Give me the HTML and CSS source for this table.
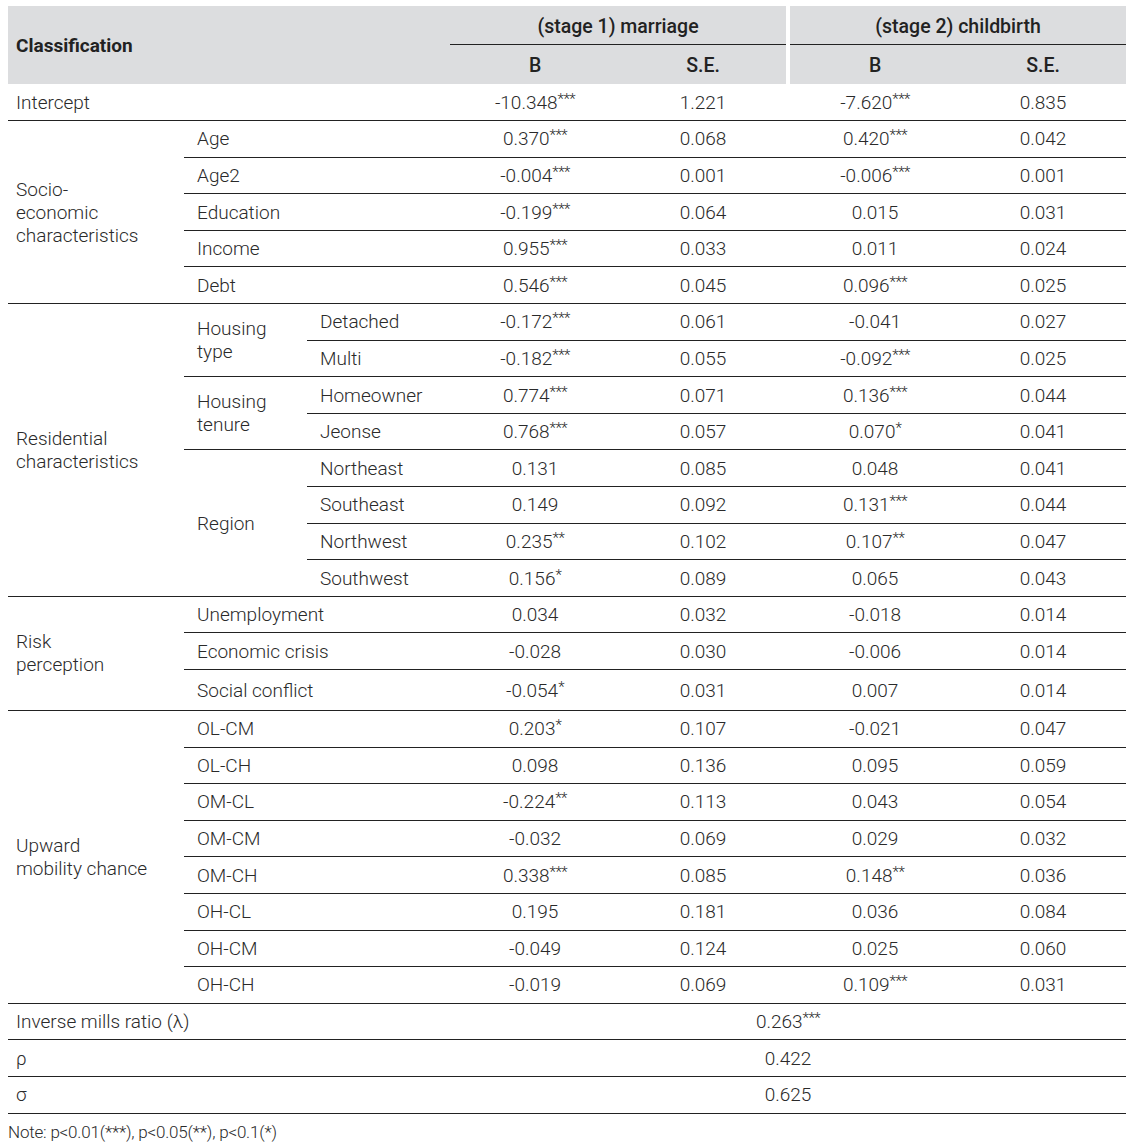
FILE: index.html
```html
<!DOCTYPE html>
<html lang="en">
<head>
<meta charset="utf-8">
<title>Heckman selection model results</title>
<link rel="stylesheet" href="styles.css">
</head>
<body>
<table class="results">
  <colgroup>
    <col class="c-cat"><col class="c-sub"><col class="c-item">
    <col class="c-b"><col class="c-se"><col class="c-gap"><col class="c-b"><col class="c-se2">
  </colgroup>
  <thead>
    <tr class="h1">
      <th class="cls" colspan="3" rowspan="2">Classification</th>
      <th class="stage" colspan="2">(stage 1) marriage</th>
      <th class="gap" rowspan="2"></th>
      <th class="stage" colspan="2">(stage 2) childbirth</th>
    </tr>
    <tr class="h2">
      <th class="sub">B</th><th class="sub">S.E.</th>
      <th class="sub">B</th><th class="sub">S.E.</th>
    </tr>
  </thead>
  <tbody>
    <tr><td class="lab" colspan="3">Intercept</td><td class="n">-10.348<sup>***</sup></td><td class="n">1.221</td><td class="g"></td><td class="n">-7.620<sup>***</sup></td><td class="n">0.835</td></tr>

    <tr><td class="lab" rowspan="5">Socio-<br>economic<br>characteristics</td><td class="lab2" colspan="2">Age</td><td class="n">0.370<sup>***</sup></td><td class="n">0.068</td><td class="g"></td><td class="n">0.420<sup>***</sup></td><td class="n">0.042</td></tr>
    <tr><td class="lab2" colspan="2">Age2</td><td class="n">-0.004<sup>***</sup></td><td class="n">0.001</td><td class="g"></td><td class="n">-0.006<sup>***</sup></td><td class="n">0.001</td></tr>
    <tr><td class="lab2" colspan="2">Education</td><td class="n">-0.199<sup>***</sup></td><td class="n">0.064</td><td class="g"></td><td class="n">0.015</td><td class="n">0.031</td></tr>
    <tr><td class="lab2" colspan="2">Income</td><td class="n">0.955<sup>***</sup></td><td class="n">0.033</td><td class="g"></td><td class="n">0.011</td><td class="n">0.024</td></tr>
    <tr><td class="lab2" colspan="2">Debt</td><td class="n">0.546<sup>***</sup></td><td class="n">0.045</td><td class="g"></td><td class="n">0.096<sup>***</sup></td><td class="n">0.025</td></tr>

    <tr><td class="lab" rowspan="8">Residential<br>characteristics</td><td class="lab2" rowspan="2">Housing<br>type</td><td class="lab2">Detached</td><td class="n">-0.172<sup>***</sup></td><td class="n">0.061</td><td class="g"></td><td class="n">-0.041</td><td class="n">0.027</td></tr>
    <tr><td class="lab2">Multi</td><td class="n">-0.182<sup>***</sup></td><td class="n">0.055</td><td class="g"></td><td class="n">-0.092<sup>***</sup></td><td class="n">0.025</td></tr>
    <tr><td class="lab2" rowspan="2">Housing<br>tenure</td><td class="lab2">Homeowner</td><td class="n">0.774<sup>***</sup></td><td class="n">0.071</td><td class="g"></td><td class="n">0.136<sup>***</sup></td><td class="n">0.044</td></tr>
    <tr><td class="lab2">Jeonse</td><td class="n">0.768<sup>***</sup></td><td class="n">0.057</td><td class="g"></td><td class="n">0.070<sup>*</sup></td><td class="n">0.041</td></tr>
    <tr><td class="lab2" rowspan="4">Region</td><td class="lab2">Northeast</td><td class="n">0.131</td><td class="n">0.085</td><td class="g"></td><td class="n">0.048</td><td class="n">0.041</td></tr>
    <tr><td class="lab2">Southeast</td><td class="n">0.149</td><td class="n">0.092</td><td class="g"></td><td class="n">0.131<sup>***</sup></td><td class="n">0.044</td></tr>
    <tr><td class="lab2">Northwest</td><td class="n">0.235<sup>**</sup></td><td class="n">0.102</td><td class="g"></td><td class="n">0.107<sup>**</sup></td><td class="n">0.047</td></tr>
    <tr><td class="lab2">Southwest</td><td class="n">0.156<sup>*</sup></td><td class="n">0.089</td><td class="g"></td><td class="n">0.065</td><td class="n">0.043</td></tr>

    <tr><td class="lab" rowspan="3">Risk<br>perception</td><td class="lab2" colspan="2">Unemployment</td><td class="n">0.034</td><td class="n">0.032</td><td class="g"></td><td class="n">-0.018</td><td class="n">0.014</td></tr>
    <tr><td class="lab2" colspan="2">Economic crisis</td><td class="n">-0.028</td><td class="n">0.030</td><td class="g"></td><td class="n">-0.006</td><td class="n">0.014</td></tr>
    <tr class="tall"><td class="lab2" colspan="2">Social conflict</td><td class="n">-0.054<sup>*</sup></td><td class="n">0.031</td><td class="g"></td><td class="n">0.007</td><td class="n">0.014</td></tr>

    <tr><td class="lab" rowspan="8">Upward<br>mobility chance</td><td class="lab2" colspan="2">OL-CM</td><td class="n">0.203<sup>*</sup></td><td class="n">0.107</td><td class="g"></td><td class="n">-0.021</td><td class="n">0.047</td></tr>
    <tr><td class="lab2" colspan="2">OL-CH</td><td class="n">0.098</td><td class="n">0.136</td><td class="g"></td><td class="n">0.095</td><td class="n">0.059</td></tr>
    <tr><td class="lab2" colspan="2">OM-CL</td><td class="n">-0.224<sup>**</sup></td><td class="n">0.113</td><td class="g"></td><td class="n">0.043</td><td class="n">0.054</td></tr>
    <tr><td class="lab2" colspan="2">OM-CM</td><td class="n">-0.032</td><td class="n">0.069</td><td class="g"></td><td class="n">0.029</td><td class="n">0.032</td></tr>
    <tr><td class="lab2" colspan="2">OM-CH</td><td class="n">0.338<sup>***</sup></td><td class="n">0.085</td><td class="g"></td><td class="n">0.148<sup>**</sup></td><td class="n">0.036</td></tr>
    <tr><td class="lab2" colspan="2">OH-CL</td><td class="n">0.195</td><td class="n">0.181</td><td class="g"></td><td class="n">0.036</td><td class="n">0.084</td></tr>
    <tr><td class="lab2" colspan="2">OH-CM</td><td class="n">-0.049</td><td class="n">0.124</td><td class="g"></td><td class="n">0.025</td><td class="n">0.060</td></tr>
    <tr><td class="lab2" colspan="2">OH-CH</td><td class="n">-0.019</td><td class="n">0.069</td><td class="g"></td><td class="n">0.109<sup>***</sup></td><td class="n">0.031</td></tr>

    <tr><td class="lab" colspan="3">Inverse mills ratio (λ)</td><td class="n" colspan="5">0.263<sup>***</sup></td></tr>
    <tr><td class="lab" colspan="3">ρ</td><td class="n" colspan="5">0.422</td></tr>
    <tr><td class="lab" colspan="3">σ</td><td class="n" colspan="5">0.625</td></tr>
  </tbody>
</table>
<p class="note">Note: p&lt;0.01(***), p&lt;0.05(**), p&lt;0.1(*)</p>
</body>
</html>
```

FILE: styles.css
```css
html, body {
  background: #ffffff;
}
body {
  margin: 6px 8px;
  font-family: Roboto, "Liberation Sans", Arial, sans-serif;
  color: #2a2a2a;
}
.results {
  border-collapse: collapse;
  table-layout: fixed;
  width: 1118px;
  font-size: 19px;
  font-weight: 300;
}
.c-cat { width: 176px; }
.c-sub { width: 123px; }
.c-item { width: 143px; }
.c-b { width: 170px; }
.c-se { width: 166px; }
.c-gap { width: 4px; }
.c-se2 { width: 166px; }

thead th {
  background: #dcdddf;
  color: #222222;
  padding: 0;
}
.h1 { height: 38px; }
.h2 { height: 40px; }
th.cls {
  text-align: left;
  font-weight: 700;
  padding-left: 8px;
  font-size: 19px;
}
th.stage {
  font-weight: 500;
  font-size: 19.5px;
  padding-top: 3px;
  border-bottom: 1px solid #222222;
}
th.sub {
  font-weight: 500;
  font-size: 19.5px;
  padding-top: 3px;
}
th.gap {
  background: #ffffff;
}

tbody tr { height: 36.6px; }
tbody tr.tall { height: 41px; }
tbody td {
  border-bottom: 1px solid #222222;
  padding: 0;
  line-height: 23px;
  vertical-align: middle;
  white-space: nowrap;
}
td.lab { padding-left: 8px; }
td.lab2 { padding-left: 13px; }
td.n {
  text-align: center;
}
sup {
  font-size: 15px;
  line-height: 0;
  vertical-align: baseline;
  position: relative;
  top: -5px;
  letter-spacing: -0.5px;
}
.note {
  margin: 8px 0 0 0;
  font-size: 17px;
  font-weight: 300;
  letter-spacing: -0.2px;
  color: #2a2a2a;
}
```
